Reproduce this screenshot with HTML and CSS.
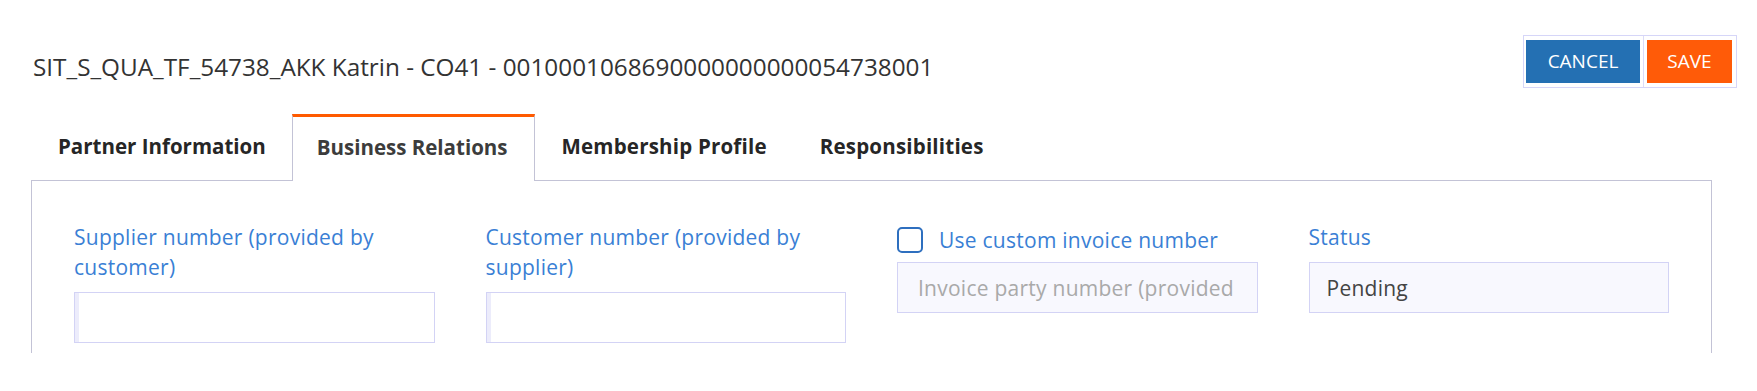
FILE: index.html
```html
<!DOCTYPE html>
<html lang="en">
<head>
<meta charset="utf-8">
<title>Business Relations</title>
<link rel="stylesheet" href="styles.css">
</head>
<body>
<div class="page">
  <header class="header">
    <h1 class="title">SIT_S_QUA_TF_54738_AKK Katrin - CO41 - 0010001068690000000000054738001</h1>
    <div class="actions">
      <button class="btn btn-cancel" type="button">CANCEL</button>
      <span class="sep"></span>
      <button class="btn btn-save" type="button">SAVE</button>
    </div>
  </header>
  <nav class="tabs">
    <div class="tab">Partner Information</div>
    <div class="tab tab-active">Business Relations</div>
    <div class="tab tab-wide">Membership Profile</div>
    <div class="tab tab-wide">Responsibilities</div>
  </nav>
  <section class="panel">
    <div class="field">
      <label class="label">Supplier number (provided by customer)</label>
      <div class="input"></div>
    </div>
    <div class="field">
      <label class="label">Customer number (provided by supplier)</label>
      <div class="input"></div>
    </div>
    <div class="field">
      <div class="check-row">
        <span class="checkbox"></span>
        <span class="label">Use custom invoice number</span>
      </div>
      <div class="input input-disabled input-placeholder"><span class="placeholder">Invoice party number (provided</span></div>
    </div>
    <div class="field">
      <label class="label">Status</label>
      <div class="input input-disabled"><span class="value">Pending</span></div>
    </div>
  </section>
</div>
</body>
</html>
```

FILE: styles.css
```css
* { box-sizing: border-box; }

body {
  margin: 0;
  background: #ffffff;
  font-family: "Open Sans", "Liberation Sans", sans-serif;
}

.page {
  padding-left: 31px;
}

.header {
  display: flex;
  justify-content: space-between;
  align-items: flex-start;
  padding-right: 20px;
}

.title {
  margin: 51px 0 0 2px;
  font-size: 24.3px;
  line-height: 32px;
  font-weight: 400;
  color: #333333;
  white-space: nowrap;
}

.actions {
  display: flex;
  margin-top: 35px;
  border: 1px solid #d6d6f8;
  padding: 4px 4px 4px 2px;
}

.btn {
  height: 43px;
  border: 0;
  padding: 0;
  color: #ffffff;
  font-family: "Open Sans", "Liberation Sans", sans-serif;
  font-size: 19px;
  line-height: 43px;
  text-align: center;
}

.btn-cancel {
  width: 114px;
  background: #2470b3;
}

.btn-save {
  width: 85px;
  background: #ff5b08;
}

.sep {
  width: 1px;
  margin: -4px 3px;
  background: #dcdcf8;
}

.tabs {
  display: flex;
  margin-top: 26px;
  margin-bottom: -1px;
}

.tab {
  height: 67px;
  padding: 15px 25px 0 26px;
  border: 1px solid transparent;
  border-top: 3px solid transparent;
  border-bottom: 0;
  font-size: 20.5px;
  line-height: 28px;
  font-weight: 700;
  color: #262626;
  white-space: nowrap;
}

.tab-wide {
  letter-spacing: 0.2px;
}

.tab-active {
  position: relative;
  z-index: 1;
  padding-left: 24px;
  padding-right: 26px;
  background: #ffffff;
  border-color: #c3c3d6;
  border-top-color: #ff5a00;
  color: #3c3c3c;
  padding-top: 16px;
}

.panel {
  display: grid;
  grid-template-columns: repeat(4, 1fr);
  column-gap: 51px;
  margin-right: 45px;
  padding: 41px 42px 10px;
  border: 1px solid #c3c3d6;
  border-bottom: 0;
}

.field {
  display: flex;
  flex-direction: column;
}

.label {
  display: block;
  font-size: 21px;
  letter-spacing: 0.25px;
  line-height: 30px;
  color: #3a7fd5;
  margin-bottom: 10px;
}

.check-row {
  display: flex;
  align-items: flex-start;
  gap: 16px;
  height: 30px;
  padding-top: 3px;
  margin-bottom: 10px;
}

.check-row .label {
  margin-bottom: 0;
}

.checkbox {
  flex: none;
  width: 26px;
  height: 26px;
  margin-top: 2px;
  border: 2px solid #2e6fbf;
  border-radius: 5px;
  background: #ffffff;
}

.input {
  display: flex;
  align-items: center;
  height: 51px;
  padding: 0 17px;
  border: 1px solid #d3d3f5;
  box-shadow: inset 4px 0 0 #ececfb;
  background: #ffffff;
  font-size: 21px;
  letter-spacing: 0.25px;
  white-space: nowrap;
  overflow: hidden;
}

.input-disabled {
  background: #f8f8fe;
  box-shadow: none;
}

.input-placeholder {
  padding-left: 20px;
}

.placeholder {
  color: #a9a9a9;
}

.value {
  color: #444444;
}
```
